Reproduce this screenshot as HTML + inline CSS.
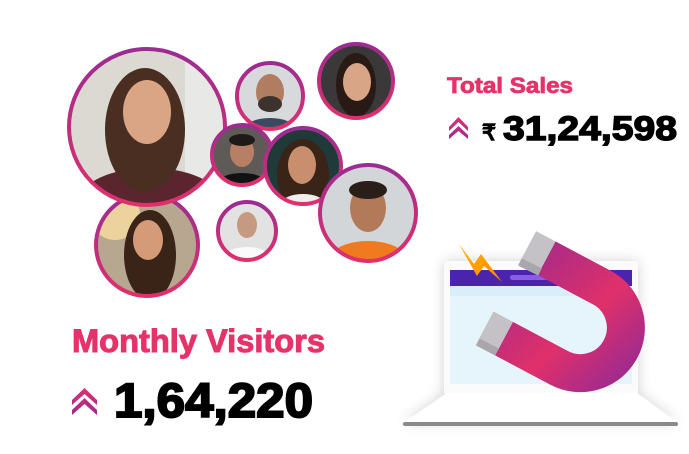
<!DOCTYPE html>
<html><head><meta charset="utf-8"><style>
html,body{margin:0;padding:0;background:#fff;width:689px;height:454px;overflow:hidden}
svg{display:block}
text{font-family:"Liberation Sans",sans-serif;font-weight:bold}
</style></head><body>
<svg width="689" height="454" viewBox="0 0 689 454" xmlns="http://www.w3.org/2000/svg">
<defs>
<linearGradient id="ring" x1="0" y1="0" x2="0" y2="1"><stop offset="0" stop-color="#9a2c92"/><stop offset="1" stop-color="#e0306c"/></linearGradient>
<linearGradient id="chev" x1="0" y1="0" x2="0" y2="1"><stop offset="0" stop-color="#e0306c"/><stop offset="1" stop-color="#9a2c92"/></linearGradient>
<linearGradient id="mag" x1="0" y1="0" x2="1" y2="1"><stop offset="0" stop-color="#9c2a8c"/><stop offset="0.6" stop-color="#e0306a"/><stop offset="1" stop-color="#a02a8e"/></linearGradient>
<linearGradient id="bolt" x1="0" y1="0" x2="1" y2="1"><stop offset="0" stop-color="#ffb400"/><stop offset="1" stop-color="#ff8a00"/></linearGradient>
<filter id="sh" x="-20%" y="-20%" width="140%" height="140%"><feGaussianBlur in="SourceAlpha" stdDeviation="7"/><feComponentTransfer><feFuncA type="linear" slope="0.18"/></feComponentTransfer><feMerge><feMergeNode/><feMergeNode in="SourceGraphic"/></feMerge></filter>
<clipPath id="c1"><circle cx="147" cy="127" r="78"/></clipPath>
<clipPath id="c2"><circle cx="147" cy="245" r="51"/></clipPath>
<clipPath id="c3"><circle cx="270" cy="96" r="33"/></clipPath>
<clipPath id="c4"><circle cx="356" cy="81" r="37"/></clipPath>
<clipPath id="c5"><circle cx="242" cy="155" r="30"/></clipPath>
<clipPath id="c6"><circle cx="303" cy="166" r="38"/></clipPath>
<clipPath id="c7"><circle cx="247" cy="231" r="29"/></clipPath>
<clipPath id="c8"><circle cx="368" cy="213" r="48"/></clipPath>
</defs>

<g clip-path="url(#c2)">
<rect x="90" y="190" width="120" height="110" fill="#b7a690"/>
<circle cx="115" cy="215" r="25" fill="#f6d9a0" opacity=".85"/>
<ellipse cx="150" cy="255" rx="26" ry="45" fill="#3a2418"/>
<ellipse cx="148" cy="240" rx="15" ry="20" fill="#d59a78"/>
</g>
<circle cx="147" cy="245" r="51" fill="none" stroke="url(#ring)" stroke-width="4"/>

<g clip-path="url(#c1)">
<rect x="60" y="40" width="180" height="180" fill="#dcd8d2"/>
<rect x="185" y="50" width="40" height="150" fill="#e8e8e6"/>
<ellipse cx="150" cy="200" rx="70" ry="32" fill="#5b2530"/>
<ellipse cx="145" cy="130" rx="40" ry="62" fill="#4a2e22"/>
<ellipse cx="147" cy="112" rx="24" ry="32" fill="#d9a585"/>
</g>
<circle cx="147" cy="127" r="78" fill="none" stroke="url(#ring)" stroke-width="4"/>

<g clip-path="url(#c3)">
<rect x="230" y="60" width="80" height="80" fill="#d8d9dc"/>
<ellipse cx="270" cy="92" rx="14" ry="18" fill="#b07d60"/>
<ellipse cx="270" cy="104" rx="12" ry="8" fill="#3c332e"/>
<ellipse cx="270" cy="128" rx="24" ry="10" fill="#3a4a60"/>
</g>
<circle cx="270" cy="96" r="33" fill="none" stroke="url(#ring)" stroke-width="4"/>

<g clip-path="url(#c4)">
<rect x="315" y="40" width="85" height="85" fill="#3a3838"/>
<ellipse cx="356" cy="85" rx="20" ry="32" fill="#2a1a16"/>
<ellipse cx="357" cy="82" rx="14" ry="19" fill="#d8a587"/>
</g>
<circle cx="356" cy="81" r="37" fill="none" stroke="url(#ring)" stroke-width="4"/>

<g clip-path="url(#c5)">
<rect x="210" y="120" width="65" height="70" fill="#5d5a58"/>
<ellipse cx="242" cy="152" rx="12" ry="15" fill="#b78064"/>
<ellipse cx="242" cy="140" rx="13" ry="6" fill="#1e1a18"/>
<ellipse cx="242" cy="183" rx="24" ry="10" fill="#111"/>
</g>
<circle cx="242" cy="155" r="30" fill="none" stroke="url(#ring)" stroke-width="4"/>

<g clip-path="url(#c6)">
<rect x="260" y="125" width="90" height="90" fill="#1f3a38"/>
<ellipse cx="303" cy="175" rx="26" ry="36" fill="#3a2418"/>
<ellipse cx="302" cy="165" rx="14" ry="19" fill="#c88e6e"/>
<ellipse cx="303" cy="202" rx="20" ry="8" fill="#eee"/>
</g>
<circle cx="303" cy="166" r="38" fill="none" stroke="url(#ring)" stroke-width="4"/>

<g clip-path="url(#c7)">
<rect x="215" y="200" width="65" height="65" fill="#e2e2e2"/>
<ellipse cx="247" cy="225" rx="10" ry="13" fill="#c59a80"/>
<ellipse cx="247" cy="257" rx="22" ry="10" fill="#fafafa"/>
</g>
<circle cx="247" cy="231" r="29" fill="none" stroke="url(#ring)" stroke-width="4"/>

<g clip-path="url(#c8)">
<rect x="318" y="163" width="102" height="102" fill="#d3d6d8"/>
<ellipse cx="368" cy="208" rx="18" ry="24" fill="#b37a5a"/>
<ellipse cx="368" cy="190" rx="19" ry="9" fill="#2a1e18"/>
<ellipse cx="368" cy="257" rx="36" ry="16" fill="#f07a1e"/>
</g>
<circle cx="368" cy="213" r="48" fill="none" stroke="url(#ring)" stroke-width="4"/>

<!-- text -->
<text x="447" y="93" font-size="22" fill="#e5336a" stroke="#e5336a" stroke-width="0.8" textLength="126" lengthAdjust="spacingAndGlyphs">Total Sales</text>
<path d="M449 127 L458.5 117 L468 127 L468 131 L458.5 122 L449 131Z M449 135 L458.5 126 L468 135 L468 139 L458.5 131 L449 139Z" fill="url(#chev)"/>
<text x="482" y="140" font-size="22" fill="#000" stroke="#000" stroke-width="0.6">₹</text>
<text x="503" y="140" font-size="34" fill="#000" stroke="#000" stroke-width="1.4" textLength="174" lengthAdjust="spacingAndGlyphs">31,24,598</text>

<text x="72" y="352" font-size="32" fill="#e5336a" stroke="#e5336a" stroke-width="1" textLength="253" lengthAdjust="spacingAndGlyphs">Monthly Visitors</text>
<path d="M72 400 L84.5 388 L97 400 L97 405 L84.5 394 L72 405Z M72 410 L84.5 398 L97 410 L97 415 L84.5 404 L72 415Z" fill="url(#chev)"/>
<text x="114" y="417" font-size="48" fill="#000" stroke="#000" stroke-width="2" textLength="199" lengthAdjust="spacingAndGlyphs">1,64,220</text>

<!-- laptop -->
<g filter="url(#sh)">
<rect x="444" y="261" width="194" height="134" rx="4" fill="#fbfbfc"/>
<path d="M447 393 L637 393 L678 423 L403 423Z" fill="#fff"/>
</g>
<rect x="450" y="270" width="182" height="16" fill="#4b24ad"/>
<rect x="510" y="275" width="70" height="5" rx="2.5" fill="#8b5ce8"/>
<rect x="450" y="286" width="182" height="98" fill="#e6f4fc"/>
<rect x="450" y="286" width="182" height="10" fill="#d8eefa"/>
<rect x="403" y="422" width="275" height="4" rx="2" fill="#8a8a8a"/>

<!-- bolt -->
<path d="M459 244 L474 264 L481 254 L502 282 L484 266 L477 276Z" fill="url(#bolt)"/>

<!-- magnet -->
<path d="M546.6 258.2 L602.3 287.8 A45.5 45.5 0 0 1 559.7 368.2 L504 338.6" fill="none" stroke="url(#mag)" stroke-width="38"/>
<path d="M527.2 247.9 L546.6 258.2 M484.6 328.3 L504 338.6" fill="none" stroke="#c4c2c6" stroke-width="38"/>
<path d="M520 262 L540 272 M478 342 L497 352" fill="none" stroke="#a9a7ac" stroke-width="8"/>
</svg>
</body></html>
